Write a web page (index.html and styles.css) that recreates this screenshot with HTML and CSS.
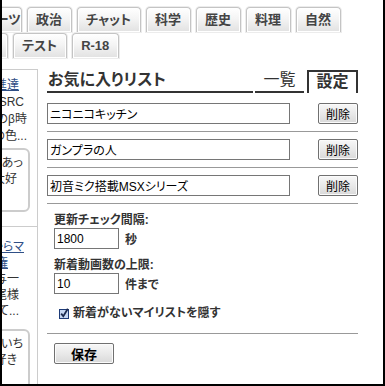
FILE: index.html
```html
<!DOCTYPE html>
<html>
<head>
    <meta charset="UTF-8">
    <title>お気に入りリスト</title>
    <link rel="stylesheet" href="styles.css">
</head>
<body>
    <div class="frame">
        <div class="tab-row first">
            <span class="tab cut">スポーツ</span>
            <span class="tab">政治</span>
            <span class="tab">チャット</span>
            <span class="tab">科学</span>
            <span class="tab">歴史</span>
            <span class="tab">料理</span>
            <span class="tab">自然</span>
        </div>
        <div class="tab-row second">
            <span class="tab cut">ゲーム</span>
            <span class="tab">テスト</span>
            <span class="tab">R-18</span>
        </div>
        <div class="layout">
            <div class="side">
                <div class="side-box top">
                    <div class="side-line short"><a href="#">推進達</a></div>
                    <div class="side-line mid"><span>SRC</span></div>
                    <div class="side-line"><span>のβ時</span></div>
                    <div class="side-line"><span>の色...</span></div>
                    <div class="bubble">
                        <div class="side-line"><span>ちょあっ</span></div>
                        <div class="side-line short"><span>大好</span></div>
                    </div>
                </div>
                <div class="side-box bottom">
                    <div class="side-line mid"><a href="#">からマ</a></div>
                    <div class="side-line tail"><a href="#">主権</a></div>
                    <div class="side-line short"><span>与一</span></div>
                    <div class="side-line short"><span>尻尾様</span></div>
                    <div class="side-line short"><span>して...</span></div>
                    <div class="bubble">
                        <div class="side-line"><span>あいち</span></div>
                        <div class="side-line short"><span>好き</span></div>
                    </div>
                </div>
            </div>
            <div class="panel">
                <div class="panel-head">
                    <h2 class="panel-title">お気に入りリスト</h2>
                    <span class="view-tab">一覧</span>
                    <span class="view-tab active">設定</span>
                </div>
                <div class="list">
                    <div class="list-row">
                        <input class="list-name" type="text" value="ニコニコキッチン">
                        <button class="btn btn-del">削除</button>
                    </div>
                    <div class="list-row">
                        <input class="list-name" type="text" value="ガンプラの人">
                        <button class="btn btn-del">削除</button>
                    </div>
                    <div class="list-row">
                        <input class="list-name" type="text" value="初音ミク搭載MSXシリーズ">
                        <button class="btn btn-del">削除</button>
                    </div>
                </div>
                <div class="settings">
                    <div class="field-label">更新チェック間隔:</div>
                    <div class="field">
                        <input class="num" type="text" value="1800">
                        <span class="unit">秒</span>
                    </div>
                    <div class="field-label next">新着動画数の上限:</div>
                    <div class="field">
                        <input class="num" type="text" value="10">
                        <span class="unit">件まで</span>
                    </div>
                    <label class="check-row">
                        <svg class="check" width="10" height="11" viewBox="0 0 10 11">
                            <rect x="0.5" y="1.5" width="9" height="9" fill="#c6d8f4" stroke="#1d3b78"/>
                            <path d="M2.2 5.6 L4.3 8.2 L8.8 0.8" fill="none" stroke="#1b2a4f" stroke-width="1.8"/>
                        </svg>
                        新着がないマイリストを隠す
                    </label>
                </div>
                <div class="actions">
                    <button class="btn btn-save">保存</button>
                </div>
            </div>
        </div>
    </div>
</body>
</html>
```
FILE: styles.css
```css
html, body {
    margin: 0;
    padding: 0;
    background-color: #ffffff;
}
body {
    font-family: "Liberation Sans", "Noto Sans CJK JP", sans-serif;
    font-size: 12px;
    color: #333333;
    font-feature-settings: "palt";
}
.frame {
    width: 385px;
    height: 386px;
    box-sizing: border-box;
    border: 2px solid #000000;
    border-top: none;
    overflow: hidden;
}
/* category tabs */
.tab-row {
    display: flex;
    gap: 5px;
    height: 25px;
    white-space: nowrap;
}
.tab-row.first {
    margin: 7px 0 0 -40px;
}
.tab-row.second {
    margin: 1px 0 0 -54px;
}
.tab {
    flex: none;
    box-sizing: border-box;
    height: 25px;
    line-height: 24px;
    padding: 0 9px 0 8px;
    border: 1px solid #c4c4c4;
    border-bottom: none;
    border-radius: 4px 4px 0 0;
    background: linear-gradient(#ffffff, #f4f4f4 45%, #e1e1e1);
    box-shadow: inset 0 0 0 1px #ffffff, 0 0 0 1px #ececec;
    color: #444444;
    font-size: 13px;
    font-weight: bold;
    text-align: center;
}
.tab.cut {
    width: 60px;
}
.layout {
    display: flex;
    align-items: flex-start;
    margin-top: 11px;
}
/* left column, cut by the window */
.side {
    flex: none;
    width: 36px;
    overflow: hidden;
}
.side-box {
    border-top: 1px solid #cccccc;
    border-right: 1px solid #cccccc;
}
.side-box.top {
    padding: 7px 0 14px;
}
.side-box.top > .side-line {
    line-height: 17px;
}
.side-box.bottom {
    padding: 12px 0 0;
    height: 200px;
}
.side-line {
    display: flex;
    justify-content: flex-end;
    white-space: nowrap;
    line-height: 16px;
    padding-right: 10px;
}
.side-line.mid {
    padding-right: 13px;
}
.side-line.short {
    padding-right: 18px;
}
.side-line.tail {
    padding-right: 29px;
}
.side-line a {
    color: #2f4f86;
}
.bubble {
    box-sizing: border-box;
    height: 64px;
    margin: 3px 7px 0 -20px;
    padding-top: 5px;
    border: 2px solid #cccccc;
    border-radius: 6px;
}
.side-box.bottom .bubble {
    margin-top: 10px;
}
.bubble .side-line {
    padding-right: 5px;
}
.bubble .side-line.short {
    padding-right: 11px;
}
/* favourite list panel */
.panel {
    flex: none;
    width: 311px;
    margin: 1px 0 0 9px;
}
.panel-head {
    display: flex;
    align-items: flex-end;
    gap: 2px;
    height: 23px;
}
.panel-title {
    flex: 1;
    margin: 0;
    padding: 0 0 1px 1px;
    font-size: 16px;
    line-height: 20px;
    border-bottom: 2px solid #333333;
}
.view-tab {
    width: 49px;
    padding-bottom: 1px;
    font-size: 16px;
    line-height: 20px;
    text-align: center;
    border-bottom: 2px solid #333333;
}
.view-tab.active {
    box-sizing: border-box;
    width: 51px;
    margin-left: 1px;
    padding-bottom: 2px;
    line-height: 19px;
    font-weight: bold;
    border: 2px solid #333333;
    border-bottom: none;
}
.list {
    margin-top: 3px;
}
.list-row {
    display: flex;
    justify-content: space-between;
    align-items: center;
    padding: 7px 0;
    border-bottom: 1px solid #999999;
}
input[type="text"] {
    box-sizing: border-box;
    height: 21px;
    margin: 0;
    padding: 0 2px;
    border: 1px solid #767676;
    border-radius: 0;
    font: inherit;
    color: #000000;
    background-color: #ffffff;
}
.list-name {
    width: 243px;
}
.btn {
    box-sizing: border-box;
    height: 21px;
    margin: 0;
    padding: 0;
    border: 1px solid #707070;
    border-radius: 2px;
    background: linear-gradient(#f7f7f7, #e9e9e9 50%, #d9d9d9);
    box-shadow: inset 0 0 0 1px #fbfbfb;
    font: inherit;
    color: #000000;
}
.btn-del {
    width: 40px;
}
.settings {
    padding: 8px 0 12px 7px;
    border-bottom: 1px solid #999999;
}
.field-label {
    font-weight: bold;
    line-height: 16px;
}
.field-label.next {
    margin-top: 8px;
}
.field {
    display: flex;
    align-items: center;
    gap: 6px;
}
.num {
    width: 65px;
}
.unit {
    font-weight: bold;
}
.check-row {
    display: flex;
    align-items: center;
    gap: 4px;
    margin-top: 11px;
    padding-left: 5px;
    line-height: 16px;
    font-weight: bold;
}
.check {
    flex: none;
}
.actions {
    padding: 9px 0 0 7px;
}
.btn-save {
    width: 60px;
    font-size: 13px;
    font-weight: bold;
}
```
